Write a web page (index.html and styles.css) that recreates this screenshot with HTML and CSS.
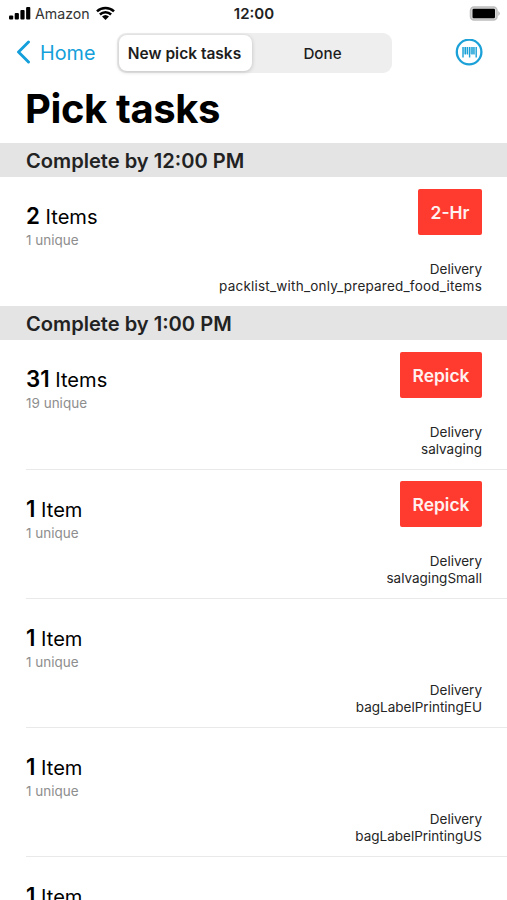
FILE: index.html
```html
<!DOCTYPE html>
<html lang="en">
<head>
<meta charset="utf-8">
<title>Pick tasks</title>
<link rel="stylesheet" href="styles.css">
</head>
<body>
<div class="screen">
  <div class="status">
    <div class="status-left">
      <svg width="23" height="14" viewBox="0 0 23 14"><rect x="0" y="9.500" width="4.200" height="4" rx="1"/><rect x="5.700" y="7" width="4.200" height="6.500" rx="1"/><rect x="11.400" y="4" width="4.200" height="9.500" rx="1"/><rect x="17.100" y="1" width="4.200" height="12.500" rx="1"/></svg>
      <span class="carrier">Amazon</span>
      <svg class="wifi" width="19" height="14" viewBox="0 0 19 14"><path d="M1 5.300a12.300 12.300 0 0 1 17 0M3.900 8.500a8.200 8.200 0 0 1 11.200 0" fill="none" stroke="#000" stroke-width="2.500"/><path d="M6 10.600a5.200 5.200 0 0 1 7 0L9.500 14z"/></svg>
    </div>
    <span class="time">12:00</span>
    <svg class="battery" width="32" height="15" viewBox="0 0 32 15"><rect x="1.500" y="1" width="26.500" height="13" rx="3.500" fill="#d8d8d8" stroke="#bdbdbd" stroke-width="1.500"/><rect x="3.500" y="2.800" width="22.500" height="9.400" rx="1.200"/><path d="M29.300 5q3 2.500 0 5z" fill="#b5b5b5"/></svg>
  </div>
  <div class="nav">
    <a class="back"><svg width="16" height="26" viewBox="0 0 16 26"><path d="M12.500 2L2.500 12L12.500 22" fill="none" stroke="#149fda" stroke-width="2.900" stroke-linecap="round" stroke-linejoin="round"/></svg><span>Home</span></a>
    <div class="segments"><div class="segment active">New pick tasks</div><div class="segment">Done</div></div>
    <svg class="scan" width="28" height="28" viewBox="0 0 28 28"><circle cx="14.100" cy="13" r="12.300" fill="none" stroke="#1ba1d7" stroke-width="2.300"/><path d="M8 8v10.500M10.300 8v7.500M12.500 8v7.500M14.600 8v10.500M17 8v7.500M19 8v7.500M21.200 8v10.500" stroke="#1ba1d7" stroke-width="1.400"/><path d="M8 11.500h4.500M14.600 11.500h4.400" stroke="#1ba1d7" stroke-opacity=".3" stroke-width="7"/></svg>
  </div>
  <h1>Pick tasks</h1>
  <h2>Complete by 12:00 PM</h2>
  <div class="task"><div class="count"><p class="items"><b>2</b> Items</p><p class="unique">1 unique</p></div><div class="detail"><span class="badge hour">2-Hr</span><p>Delivery</p><p class="long">packlist_with_only_prepared_food_items</p></div></div>
  <h2>Complete by 1:00 PM</h2>
  <div class="task ruled"><div class="count"><p class="items"><b>31</b> Items</p><p class="unique">19 unique</p></div><div class="detail"><span class="badge">Repick</span><p>Delivery</p><p>salvaging</p></div></div>
  <div class="task ruled"><div class="count"><p class="items"><b>1</b> Item</p><p class="unique">1 unique</p></div><div class="detail"><span class="badge">Repick</span><p>Delivery</p><p>salvagingSmall</p></div></div>
  <div class="task ruled"><div class="count"><p class="items"><b>1</b> Item</p><p class="unique">1 unique</p></div><div class="detail"><p>Delivery</p><p>bagLabelPrintingEU</p></div></div>
  <div class="task ruled"><div class="count"><p class="items"><b>1</b> Item</p><p class="unique">1 unique</p></div><div class="detail"><p>Delivery</p><p>bagLabelPrintingUS</p></div></div>
  <div class="task"><div class="count"><p class="items"><b>1</b> Item</p></div></div>
</div>
</body>
</html>
```
FILE: styles.css
```css
* { box-sizing: border-box; margin: 0; padding: 0; }
body { background: #fff; color: #000; font-family: Inter, "Liberation Sans", sans-serif; }
.screen { width: 507px; height: 900px; overflow: hidden; display: flex; flex-direction: column; }
.screen > * { flex-shrink: 0; }
svg { display: block; flex: none; }
.status { height: 28px; padding: 0 6px 2px 9px; display: grid; grid-template-columns: 1fr auto 1fr; align-items: center; }
.status-left { display: flex; align-items: center; }
.carrier { margin-left: 3px; font-size: 14.2px; color: #333; }
.wifi { margin-left: 6px; }
.time { margin-right: 2px; font-size: 15px; font-weight: 600; color: #222; }
.battery { justify-self: end; }
.nav { height: 50px; padding: 0 24px 0 16px; display: flex; align-items: center; }
.back { width: 101px; display: flex; align-items: center; gap: 8px; color: #149fda; font-size: 19.8px; }
.segments { width: 275px; height: 40px; padding: 2px; display: grid; grid-template-columns: 133px 1fr; border-radius: 9px; background: #eee; }
.segment { display: flex; align-items: center; justify-content: center; padding-left: 3px; font-size: 15.2px; font-weight: 500; color: #1d1d1d; }
.active { padding: 0 2px 0 0; background: #fff; border-radius: 8px; font-size: 15.5px; font-weight: 600; box-shadow: 0 1px 4px #0003; }
.scan { margin-left: auto; }
h1 { height: 65px; padding-left: 25px; font-size: 40px; line-height: 61px; font-weight: 700; letter-spacing: -0.4px; }
h2 { height: 34px; padding-left: 26px; background: #e4e4e4; color: #222; font-size: 20.1px; line-height: 36px; font-weight: 560; }
.task { height: 129px; margin-left: 26px; padding-right: 25px; display: flex; justify-content: space-between; }
.ruled { background: linear-gradient(#e9e9e9, #e9e9e9) left bottom / 100% 1px no-repeat; }
h2 + .ruled { height: 130px; }
.count { padding-top: 25px; }
.items { font-size: 20.1px; line-height: 28px; }
.items b { font-size: 22.3px; font-weight: 600; }
.unique { margin-top: -1px; font-size: 13.5px; line-height: 20px; color: #8e8e8e; }
.detail { display: flex; flex-direction: column; align-items: flex-end; padding: 12px 0 11px; font-size: 13.5px; line-height: 17px; color: #252525; }
.ruled .detail { padding-bottom: 12px; }
.ruled + .task .detail { padding-top: 11px; }
.detail p:nth-last-child(2) { margin-top: auto; }
.long { letter-spacing: 0.21px; }
.badge { width: 82px; height: 46px; display: flex; align-items: center; justify-content: center; border-radius: 2px; background: #ff3b30; color: #fff1ef; font-size: 17.4px; font-weight: 560; }
.hour { width: 64px; }
```
